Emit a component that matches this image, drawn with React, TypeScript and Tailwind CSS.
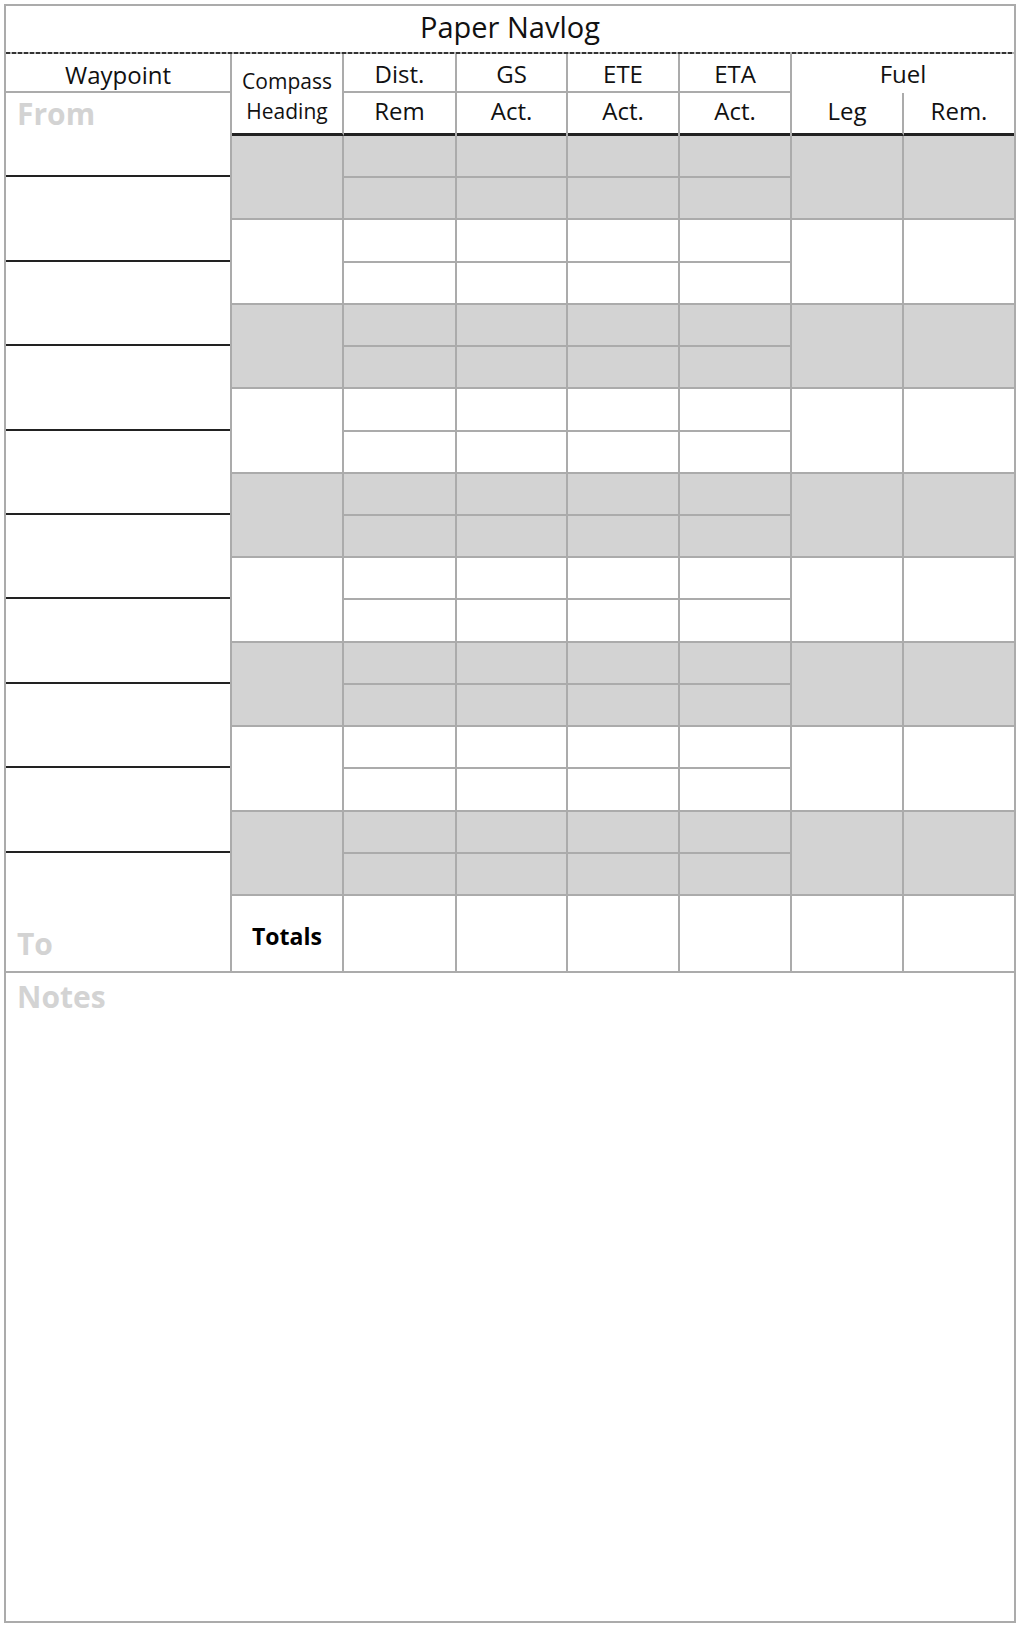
const splitHeads = [
  { w: "w-[113px]", top: "Dist.", bottom: "Rem" },
  { w: "w-[111px]", top: "GS", bottom: "Act." },
  { w: "w-[112px]", top: "ETE", bottom: "Act." },
  { w: "w-[112px]", top: "ETA", bottom: "Act." },
];

const pairs = [0, 1, 2, 3, 4, 5, 6, 7, 8];
const waypointRows = [0, 1, 2, 3, 4, 5, 6, 7];

function PairRow({ shaded }: { shaded: boolean }) {
  return (
    <div
      className={
        shaded
          ? "h-[84.44px] shrink-0 flex border-b-2 border-[#ababab] bg-[#d3d3d3]"
          : "h-[84.44px] shrink-0 flex border-b-2 border-[#ababab] bg-white"
      }
    >
      <div className="w-[112px] shrink-0 border-r-2 border-[#ababab]" />
      {splitHeads.map((c, i) => (
        <div key={i} className={`${c.w} shrink-0 border-r-2 border-[#ababab] flex flex-col`}>
          <div className="flex-1 border-b-2 border-[#ababab]" />
          <div className="flex-1" />
        </div>
      ))}
      <div className="w-[112px] shrink-0 border-r-2 border-[#ababab]" />
      <div className="flex-1" />
    </div>
  );
}

export default function App() {
  return (
    <div className="min-h-[1626px] bg-white pt-[4px] pl-[4px] font-['Open_Sans',sans-serif] leading-[normal] text-[#111]">
      <div className="w-[1012px] h-[1619px] border-2 border-[#ababab] flex flex-col">
        {/* Title */}
        <div className="h-[46px] shrink-0 pb-[6px] flex items-center justify-center text-[29px]">
          Paper Navlog
        </div>
        <div className="h-[2px] shrink-0 bg-[repeating-linear-gradient(90deg,#333_0px,#333_4px,#b0b0b0_4px,#b0b0b0_6px)]" />

        {/* Table */}
        <div className="h-[919px] shrink-0 flex border-b-2 border-[#ababab]">
          {/* Waypoint column */}
          <div className="w-[226px] shrink-0 border-r-2 border-[#ababab] flex flex-col">
            <div className="h-[39px] shrink-0 border-b-2 border-[#ababab] pt-[3px] flex items-center justify-center text-[24px]">
              Waypoint
            </div>
            <div className="h-[84.2px] shrink-0 border-b-2 border-[#222] pl-[11px] text-[30px] font-bold text-[#d3d3d3]">
              From
            </div>
            {waypointRows.map((r) => (
              <div key={r} className="h-[84.44px] shrink-0 border-b-2 border-[#222]" />
            ))}
            <div className="flex-1 flex flex-col justify-end pl-[11px] pb-[7px] text-[30px] font-bold text-[#d3d3d3]">
              To
            </div>
          </div>

          {/* Right part */}
          <div className="w-[782px] shrink-0 flex flex-col">
            {/* Header */}
            <div className="h-[82px] shrink-0 flex">
              <div className="w-[112px] shrink-0 border-r-2 border-[#ababab] border-b-[3px] border-b-[#222] pt-[6px] flex flex-col items-center justify-center text-[21px] leading-[29.5px]">
                <span>Compass</span>
                <span>Heading</span>
              </div>
              {splitHeads.map((c, i) => (
                <div key={i} className={`${c.w} shrink-0 border-r-2 border-[#ababab] flex flex-col`}>
                  <div className="h-[39px] shrink-0 border-b-2 border-[#ababab] pt-[2px] flex items-center justify-center text-[24px]">
                    {c.top}
                  </div>
                  <div className="flex-1 border-b-[3px] border-[#222] pb-[6px] flex items-center justify-center text-[24px]">
                    {c.bottom}
                  </div>
                </div>
              ))}
              <div className="flex-1 flex flex-col">
                <div className="h-[39px] shrink-0 pt-[2px] pb-[2px] flex items-center justify-center text-[24px]">
                  Fuel
                </div>
                <div className="flex-1 flex">
                  <div className="w-[112px] shrink-0 border-r-2 border-[#ababab] border-b-[3px] border-b-[#222] pb-[6px] flex items-center justify-center text-[24px]">
                    Leg
                  </div>
                  <div className="flex-1 border-b-[3px] border-[#222] pb-[6px] flex items-center justify-center text-[24px]">
                    Rem.
                  </div>
                </div>
              </div>
            </div>

            {/* Body */}
            {pairs.map((p) => (
              <PairRow key={p} shaded={p % 2 === 0} />
            ))}

            {/* Totals */}
            <div className="flex-1 flex">
              <div className="w-[112px] shrink-0 border-r-2 border-[#ababab] pt-[6px] flex items-center justify-center text-[23px] font-bold text-black">
                Totals
              </div>
              <div className="w-[113px] shrink-0 border-r-2 border-[#ababab]" />
              <div className="w-[111px] shrink-0 border-r-2 border-[#ababab]" />
              <div className="w-[112px] shrink-0 border-r-2 border-[#ababab]" />
              <div className="w-[112px] shrink-0 border-r-2 border-[#ababab]" />
              <div className="w-[112px] shrink-0 border-r-2 border-[#ababab]" />
              <div className="flex-1" />
            </div>
          </div>
        </div>

        {/* Notes */}
        <div className="flex-1 pl-[11px] pt-[3px] text-[30px] font-bold text-[#d3d3d3]">
          Notes
        </div>
      </div>
    </div>
  );
}
